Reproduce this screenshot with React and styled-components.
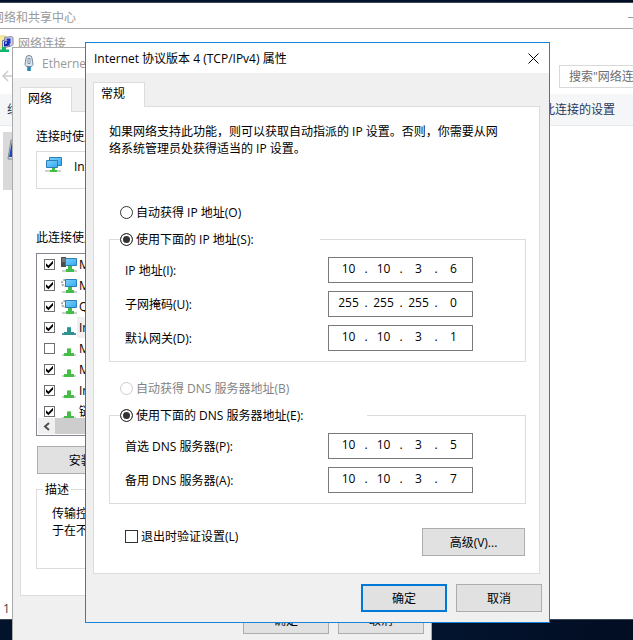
import React from 'react';
import styled, { createGlobalStyle } from 'styled-components';

const GlobalStyle = createGlobalStyle`
  * {
    box-sizing: border-box;
  }

  body {
    margin: 0;
    overflow: hidden;
    font: 12px/17px "Open Sans", "Noto Sans CJK SC", sans-serif;
    color: #000;
  }

  button,
  input {
    font: inherit;
    color: inherit;
  }
`;

// Desktop
const Desktop = styled.main`
  position: relative;
  min-height: 100vh;
  overflow: hidden;
  background: linear-gradient(90deg, #02132b 0%, #03142e 70%, #020d22 100%);
`;

// Background windows
const BackWindow = styled.section`
  position: absolute;
  top: ${(p) => p.$top}px;
  left: 0;
  right: 0;
  bottom: 20px;
  background: #fff;
  border-top: 1px solid ${(p) => p.$line};
  border-bottom: 1px solid #3c4654;
`;

const SharingTitle = styled.header`
  display: flex;
  justify-content: space-between;
  align-items: center;
  height: 28px;
  margin-left: -8px;
  margin-right: -6px;
  color: #999;
`;

const MinimizeButton = styled.button`
  width: 11px;
  height: 11px;
  padding: 0;
  border: 0;
  background: linear-gradient(#999, #999) center / 100% 1px no-repeat;
`;

const ExplorerTitle = styled.header`
  display: flex;
  align-items: center;
  gap: 4px;
  height: 29px;
  color: #999;

  svg {
    margin-left: -2px;
  }
`;

const NavBar = styled.div`
  display: flex;
  justify-content: space-between;
  align-items: center;
  height: 36px;
`;

const BackButton = styled.button`
  display: flex;
  padding: 0 0 0 2px;
  border: 0;
  background: none;
`;

const SearchBox = styled.input`
  width: 120px;
  height: 23px;
  margin-right: -46px;
  padding: 0 9px;
  border: 1px solid #d9d9d9;
  outline: 0;
  background: #fff;

  &::placeholder {
    color: #6d6d6d;
    opacity: 1;
  }
`;

const CommandBar = styled.nav`
  display: flex;
  justify-content: space-between;
  align-items: center;
  height: 32px;
  padding: 0 18px 0 7px;
  background: #f5f6f7;
  border-bottom: 1px solid #e8eaec;
`;

const Command = styled.button`
  padding: 0;
  border: 0;
  background: none;
  color: #1e395b;
`;

const ConnectionTile = styled.div`
  width: 240px;
  height: 58px;
  margin: 6px 0 0 3px;
  padding: 7px 4px;
  background: #d9d9d9;
`;

const StatusBar = styled.footer`
  position: absolute;
  left: 3px;
  bottom: 2px;
  color: #444;
`;

// Property windows
const Dialog = styled.section`
  position: absolute;
  top: ${(p) => p.$top}px;
  left: ${(p) => p.$left}px;
  right: ${(p) => p.$right}px;
  background: #f0f0f0;
  border: 1px solid ${(p) => (p.$active ? '#1883d7' : '#aaa')};
`;

const TitleBar = styled.header`
  display: flex;
  align-items: center;
  gap: 5px;
  height: 30px;
  padding: 0 10px 0 8px;
  background: #fff;
  color: ${(p) => (p.$active ? '#000' : '#999')};
`;

const Title = styled.h1`
  flex: 1;
  margin: 0;
  font-size: 12px;
  font-weight: 400;
`;

const CloseButton = styled.button`
  display: flex;
  padding: 0;
  border: 0;
  background: none;
`;

const TabArea = styled.div`
  padding: 9px 9px 0 7px;
`;

const Tab = styled.button`
  position: relative;
  display: block;
  min-width: 52px;
  height: 25px;
  margin-bottom: -1px;
  padding: 0 7px 3px;
  border: 1px solid #dcdcdc;
  border-bottom: 0;
  background: #fff;
  text-align: left;
`;

const Panel = styled.div`
  padding: 16px 13px ${(p) => p.$bottom}px 15px;
  border: 1px solid #dcdcdc;
  background: #fff;
`;

const Intro = styled.p`
  margin: 0 0 47px;
  padding-right: 20px;
`;

const Caption = styled.p`
  margin: 0;
`;

const DialogFooter = styled.footer`
  display: flex;
  justify-content: flex-end;
  gap: 9px;
  padding: 10px 7px;
`;

const Button = styled.button`
  width: ${(p) => p.$width || 86}px;
  height: 28px;
  padding: 0;
  border: ${(p) => (p.$primary ? '2px solid #0078d7' : '1px solid #adadad')};
  background: #e1e1e1;
`;

const Group = styled.fieldset`
  min-width: 0;
  margin: 0;
  padding: ${(p) => p.$pad || '9px 52px 10px 10px'};
  border: 1px solid #dcdcdc;
`;

const GroupLegend = styled.legend`
  min-width: ${(p) => p.$width || 0}px;
  height: 17px;
  padding: ${(p) => (p.$width ? 0 : '0 2px')};
`;

const Choice = styled.label`
  display: flex;
  align-items: center;
  gap: 3px;
  height: 17px;
  color: ${(p) => (p.$disabled ? '#838383' : '#000')};
`;

const ChoiceLine = styled.div`
  padding: 0 11px;
  margin: ${(p) => p.$top}px 0 10px;
`;

const Radio = styled.input.attrs({ type: 'radio' })`
  appearance: none;
  width: 13px;
  height: 13px;
  margin: 0;
  border: 1px solid #333;
  border-radius: 50%;
  background: #fff;

  &:checked {
    background: #333;
    box-shadow: inset 0 0 0 2px #fff;
  }

  &:disabled {
    border-color: #ccc;
  }
`;

const Check = styled.input.attrs({ type: 'checkbox' })`
  flex: none;
  appearance: none;
  width: ${(p) => p.$size}px;
  height: ${(p) => p.$size}px;
  margin: 0;
  border: 1px solid ${(p) => (p.$size > 11 ? '#333' : '#707070')};
  background: #fff;

  /* check mark drawn from a clipped square */
  &:checked::before {
    content: '';
    display: block;
    height: 100%;
    background: #000;
    clip-path: polygon(11% 36%, 38% 60%, 89% 8%, 89% 40%, 38% 92%, 11% 67%);
  }
`;

const FieldRows = styled.div`
  display: grid;
  gap: 8px;
  padding-left: 5px;
`;

const FieldRow = styled.div`
  display: flex;
  justify-content: space-between;
  align-items: center;
`;

const AddressBox = styled.div`
  display: flex;
  width: 145px;
  height: 26px;
  padding: 0 2px 2px 4px;
  border: 1px solid #7a7a7a;
  background: #fff;
  line-height: 22px;
`;

const Octet = styled.input`
  width: 31px;
  padding: 0;
  border: 0;
  outline: 0;
  background: none;
  text-align: center;
`;

const Dot = styled.span`
  width: 4px;
  text-align: center;
`;

const PanelFooter = styled.div`
  display: flex;
  justify-content: space-between;
  margin-top: 24px;
  padding: 0 1px 0 16px;
`;

// Ethernet window parts
const AdapterBox = styled.div`
  display: flex;
  gap: 12px;
  height: 38px;
  margin: 6px 0 40px;
  padding: 4px 8px;
  border: 1px solid #dcdcdc;

  span {
    margin-top: 2px;
  }
`;

const ItemBox = styled.div`
  margin: 7px 0 10px;
  padding: 0 1px 1px;
  border: 1px solid #828790;
`;

const ItemList = styled.ul`
  height: 164px;
  margin: 0;
  padding: 0;
  overflow: hidden;
  list-style: none;
`;

const Item = styled.li`
  label {
    display: flex;
    align-items: center;
    height: 21px;
    padding-left: 6px;
  }

  svg {
    flex: none;
    margin-left: 6px;
  }

  span {
    flex: 1;
    padding: 2px 2px;
    background: ${(p) => (p.$selected ? '#f0f0f0' : 'none')};
    white-space: nowrap;
  }
`;

const ScrollBar = styled.div`
  display: flex;
  height: 16px;
  background: #f0f0f0;
`;

const ScrollButton = styled.button`
  display: flex;
  justify-content: center;
  align-items: center;
  width: 17px;
  padding: 0;
  border: 0;
  background: #f0f0f0;
`;

const ScrollThumb = styled.div`
  width: 60%;
  background: #cdcdcd;
`;

const InstallRow = styled.div`
  margin: 0 1px 7px;
`;

const Description = styled.p`
  margin: 0;
  padding-left: 9px;
  white-space: nowrap;
`;

// Icons
const CloseIcon = () => (
  <svg width="11" height="11" viewBox="0 0 11 11">
    <path d="M.5.5l10 10M10.5.5l-10 10" stroke="#000" fill="none" />
  </svg>
);

const BackIcon = () => (
  <svg width="12" height="12" viewBox="0 0 12 12">
    <path d="M6 1L1 6l5 5M1 6h11" stroke="#ccc" strokeWidth="1.5" fill="none" />
  </svg>
);

const FolderIcon = () => (
  <svg width="16" height="18" viewBox="0 0 16 18">
    <path d="M0 1h8v12H0z" fill="#f9ec9c" stroke="#e3d27c" />
    <path d="M6.5 2.5l7-1 1.500 1v7l-1.500 1.500-7 1z" fill="#cdd0e2" stroke="#8488a2" />
    <path d="M4.500 5.500l7-1v7l-7 1z" fill="#dfe2ee" stroke="#70759a" />
    <path d="M6 6.500l5-1v5l-5 1z" fill="#1420b0" />
    <path d="M8.500 3.500h4v5h-2z" fill="#1d35cc" />
    <path d="M7 7l2-.5v2l-2 1z" fill="#86a8ff" />
    <path d="M4 12h4v2.500h3V17H1v-2.500h3z" fill="#12b76a" />
  </svg>
);

const PlugIcon = () => (
  <svg width="16" height="17" viewBox="0 0 16 17">
    <path d="M5 3q0-2.500 3-2.500T11 3l1 6.500-1.500 2h-5l-1.500-2z" fill="#dce6ef" stroke="#74879a" />
    <path d="M7 3.500h2v5H7z" fill="#f8fbfd" stroke="#7d90a3" />
    <path d="M6 12h4v4H6z" fill="#49a6d0" />
    <path d="M8 12v4" stroke="#1b5d83" />
  </svg>
);

const Gradients = () => (
  <defs>
    <linearGradient id="screen" x1="0" y1="0" x2="1" y2="1">
      <stop offset="0" stopColor="#7dd0fc" />
      <stop offset="1" stopColor="#32aaf2" />
    </linearGradient>
  </defs>
);

const AdapterIcon = () => (
  <svg width="17" height="17" viewBox="0 0 17 17">
    <Gradients />
    <path d="M4.500 1.500h12v8h-12z" fill="url(#screen)" stroke="#2b7fb5" />
    <path d="M1.500 4.500h11v7h-11z" fill="url(#screen)" stroke="#2b7fb5" />
    <path d="M0 15h16" stroke="#cfcfcf" strokeWidth="2" />
    <path d="M7 12h3v2h2v2H5v-2h2z" fill="#3fc043" />
  </svg>
);

const ServiceIcon = ({ kind }) => (
  <svg width="16" height="17" viewBox="0 0 16 17">
    {kind === 'client' && (
      <g>
        <path d="M0 1h5v10H0z" fill="#4a4f53" />
        <path d="M1 3h3M1 5h3" stroke="#9da3a7" />
      </g>
    )}
    {kind === 'service' && (
      <circle cx="4" cy="6" r="3" fill="#fff" stroke="#a3aab0" strokeWidth="2" strokeDasharray="2 1" />
    )}
    <path d="M4.500 2.500h11v7h-11z" fill="url(#screen)" stroke="#2b7fb5" />
    <path d="M1 15h15" stroke="#cfcfcf" strokeWidth="2" />
    <path d="M7 10h4v3h2v3H5v-3h2z" fill="#41bd4b" />
  </svg>
);

const ProtocolIcon = ({ selected }) => (
  <svg width="16" height="17" viewBox="0 0 16 17">
    <path d="M1 15h14" stroke={selected ? '#4a90b8' : '#cfcfcf'} strokeWidth="2" />
    <path d="M6 8h4v5h3v3H3v-3h3z" fill={selected ? '#2a9590' : '#46bd49'} />
    <path d="M6 8h4v1H6z" fill={selected ? '#4aa9b5' : '#8fdc87'} />
  </svg>
);

const MonitorIcon = () => (
  <svg width="30" height="22" viewBox="0 0 30 22">
    <path d="M4 1h23l-3 19H1z" fill="#d4dbea" stroke="#7f8798" />
    <path d="M5 2h20l-3 16H2z" fill="#1c48bd" />
  </svg>
);

const ScrollArrow = () => (
  <svg width="7" height="9" viewBox="0 0 7 9">
    <path d="M6 1L2 4.500 6 8" stroke="#505050" strokeWidth="2" fill="none" />
  </svg>
);

const items = [
  { name: 'Microsoft 网络客户端', kind: 'client', checked: true },
  { name: 'Microsoft 网络的文件和打印机共享', kind: 'service', checked: true },
  { name: 'QoS 数据包计划程序', kind: 'service', checked: true },
  { name: 'Internet 协议版本 4 (TCP/IPv4)', kind: 'protocol', checked: true, selected: true },
  { name: 'Microsoft 网络适配器多路传送器协议', kind: 'protocol', checked: false },
  { name: 'Microsoft LLDP 协议驱动程序', kind: 'protocol', checked: true },
  { name: 'Internet 协议版本 6 (TCP/IPv6)', kind: 'protocol', checked: true },
  { name: '链路层拓扑发现响应程序', kind: 'protocol', checked: true },
];

const ipFields = [
  { id: 'ip', label: 'IP 地址(I):', value: '10.10.3.6' },
  { id: 'mask', label: '子网掩码(U):', value: '255.255.255.0' },
  { id: 'gateway', label: '默认网关(D):', value: '10.10.3.1' },
];

const dnsFields = [
  { id: 'dns1', label: '首选 DNS 服务器(P):', value: '10.10.3.5' },
  { id: 'dns2', label: '备用 DNS 服务器(A):', value: '10.10.3.7' },
];

function AddressField({ id, label, value }) {
  return (
    <FieldRow>
      <label htmlFor={`${id}-0`}>{label}</label>
      <AddressBox>
        {value.split('.').map((octet, i) => (
          <React.Fragment key={i}>
            {i > 0 && <Dot>.</Dot>}
            <Octet id={`${id}-${i}`} aria-label={i ? label : undefined} defaultValue={octet} maxLength={3} />
          </React.Fragment>
        ))}
      </AddressBox>
    </FieldRow>
  );
}

function NetworkConnections() {
  return (
    <BackWindow $top={28} $line="#aaa">
      <ExplorerTitle>
        <FolderIcon />
        网络连接
      </ExplorerTitle>
      <NavBar>
        <BackButton aria-label="后退"><BackIcon /></BackButton>
        <SearchBox aria-label="搜索" placeholder={'搜索"网络连接"'} />
      </NavBar>
      <CommandBar>
        <Command>组织</Command>
        <Command>更改此连接的设置</Command>
      </CommandBar>
      <ConnectionTile><MonitorIcon /></ConnectionTile>
      <StatusBar>1 个项目</StatusBar>
    </BackWindow>
  );
}

function EthernetDialog() {
  return (
    <Dialog $top={47} $left={12} $right={201}>
      <TitleBar>
        <PlugIcon />
        <Title>Ethernet0 属性</Title>
      </TitleBar>
      <TabArea>
        <Tab>网络</Tab>
        <Panel $bottom={26}>
          <Caption>连接时使用:</Caption>
          <AdapterBox>
            <AdapterIcon />
            <span>Intel(R)</span>
          </AdapterBox>
          <Caption>此连接使用下列项目(O):</Caption>
          <ItemBox>
            <ItemList>
              {items.map((item) => (
                <Item key={item.name} $selected={item.selected}>
                  <label>
                    <Check $size={11} defaultChecked={item.checked} />
                    {item.kind === 'protocol'
                      ? <ProtocolIcon selected={item.selected} />
                      : <ServiceIcon kind={item.kind} />}
                    <span>{item.name}</span>
                  </label>
                </Item>
              ))}
            </ItemList>
            <ScrollBar>
              <ScrollButton aria-label="向左滚动"><ScrollArrow /></ScrollButton>
              <ScrollThumb />
            </ScrollBar>
          </ItemBox>
          <InstallRow>
            <Button $width={113}>安装(N)...</Button>
          </InstallRow>
          <Group $pad="7px 15px 29px 6px">
            <GroupLegend>描述</GroupLegend>
            <Description>
              传输控制协议/Internet 协议。该协议是默认的广域网络协议，用
              <br />
              于在不同的相互连接的网络上通信。
            </Description>
          </Group>
        </Panel>
      </TabArea>
      <DialogFooter>
        <Button>确定</Button>
        <Button>取消</Button>
      </DialogFooter>
    </Dialog>
  );
}

function Ipv4Dialog() {
  return (
    <Dialog $active $top={42} $left={85} $right={83}>
      <TitleBar $active>
        <Title>Internet 协议版本 4 (TCP/IPv4) 属性</Title>
        <CloseButton aria-label="关闭"><CloseIcon /></CloseButton>
      </TitleBar>
      <TabArea>
        <Tab>常规</Tab>
        <Panel $bottom={17}>
          <Intro>
            如果网络支持此功能，则可以获取自动指派的 IP 设置。否则，你需要从网络系统管理员处获得适当的 IP 设置。
          </Intro>

          <ChoiceLine $top={0}>
            <Choice><Radio name="ip" />自动获得 IP 地址(O)</Choice>
          </ChoiceLine>
          <Group>
            <GroupLegend $width={200}>
              <Choice><Radio name="ip" defaultChecked />使用下面的 IP 地址(S):</Choice>
            </GroupLegend>
            <FieldRows>
              {ipFields.map((f) => <AddressField key={f.id} {...f} />)}
            </FieldRows>
          </Group>

          <ChoiceLine $top={18}>
            <Choice $disabled><Radio name="dns" disabled />自动获得 DNS 服务器地址(B)</Choice>
          </ChoiceLine>
          <Group>
            <GroupLegend $width={247}>
              <Choice><Radio name="dns" defaultChecked />使用下面的 DNS 服务器地址(E):</Choice>
            </GroupLegend>
            <FieldRows>
              {dnsFields.map((f) => <AddressField key={f.id} {...f} />)}
            </FieldRows>
          </Group>

          <PanelFooter>
            <Choice><Check $size={13} />退出时验证设置(L)</Choice>
            <Button $width={103}>高级(V)...</Button>
          </PanelFooter>
        </Panel>
      </TabArea>
      <DialogFooter>
        <Button $primary>确定</Button>
        <Button>取消</Button>
      </DialogFooter>
    </Dialog>
  );
}

function App() {
  return (
    <Desktop>
      <GlobalStyle />
      <BackWindow $top={2} $line="#3c4654">
        <SharingTitle>
          网络和共享中心
          <MinimizeButton aria-label="最小化" />
        </SharingTitle>
      </BackWindow>
      <NetworkConnections />
      <EthernetDialog />
      <Ipv4Dialog />
    </Desktop>
  );
}

export default App;
